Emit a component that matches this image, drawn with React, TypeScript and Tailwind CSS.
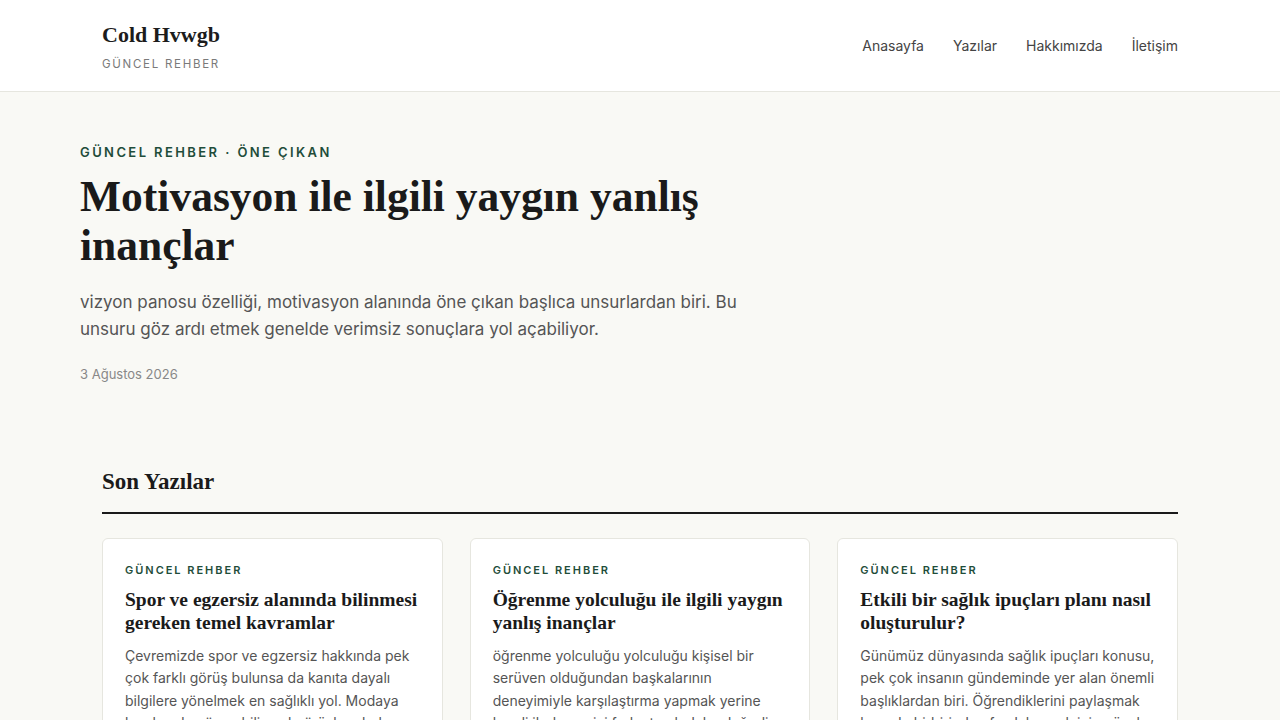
const serif = { fontFamily: '"Liberation Serif", "Times New Roman", serif' }

const posts = [
    {
        title: 'Spor ve egzersiz alanında bilinmesi gereken temel kavramlar',
        excerpt:
            'Çevremizde spor ve egzersiz hakkında pek çok farklı görüş bulunsa da kanıta dayalı bilgilere yönelmek en sağlıklı yol. Modaya kapılmadan önce bilimsel görüşlere bakın.',
    },
    {
        title: 'Öğrenme yolculuğu ile ilgili yaygın yanlış inançlar',
        excerpt:
            'öğrenme yolculuğu yolculuğu kişisel bir serüven olduğundan başkalarının deneyimiyle karşılaştırma yapmak yerine kendi ilerlemenizi fark etmek daha değerli.',
    },
    {
        title: 'Etkili bir sağlık ipuçları planı nasıl oluşturulur?',
        excerpt:
            'Günümüz dünyasında sağlık ipuçları konusu, pek çok insanın gündeminde yer alan önemli başlıklardan biri. Öğrendiklerini paylaşmak hem de birbirinden faydalanmak için güzel bir yol.',
    },
]

function Header() {
    return (
        <header className="border-b border-[#e6e6df] bg-white">
            <div className="mx-auto flex h-[91px] w-[1076px] items-center justify-between">
                <div className="flex flex-col pt-[4px]">
                    <span
                        className="text-[22px] leading-7 font-bold text-[#1c1c1c]"
                        style={serif}>
                        Cold Hvwgb
                    </span>
                    <span className="mt-[7px] text-[11.5px] tracking-[0.15em] text-[#7a7a7a]">
                        GÜNCEL REHBER
                    </span>
                </div>
                <nav className="flex items-center gap-[29px] text-[14px] text-[#444]">
                    <a>Anasayfa</a>
                    <a>Yazılar</a>
                    <a>Hakkımızda</a>
                    <a>İletişim</a>
                </nav>
            </div>
        </header>
    )
}

function Hero() {
    return (
        <section className="mx-auto w-[1120px] pt-[51px]">
            <p className="text-[13px] font-semibold tracking-[0.185em] text-[#1f4d3a]">
                GÜNCEL REHBER · ÖNE ÇIKAN
            </p>
            <h1
                className="mt-[9px] w-[700px] text-[43.5px] leading-[49px] font-bold text-[#1a1a1a]"
                style={serif}>
                Motivasyon ile ilgili yaygın yanlış inançlar
            </h1>
            <p className="mt-[19px] w-[680px] text-[17px] leading-[27px] text-[#555]">
                vizyon panosu özelliği, motivasyon alanında öne çıkan başlıca
                unsurlardan biri. Bu unsuru göz ardı etmek genelde verimsiz
                sonuçlara yol açabiliyor.
            </p>
            <p className="mt-[22px] text-[13px] text-[#888]">3 Ağustos 2026</p>
        </section>
    )
}

function PostCard({ title, excerpt }: { title: string; excerpt: string }) {
    return (
        <article className="rounded-md border border-[#e6e6df] bg-white px-[22px] pt-[23px] pb-6">
            <p className="text-[11px] font-semibold tracking-[0.18em] text-[#1f4d3a]">
                GÜNCEL REHBER
            </p>
            <h3
                className="mt-[9px] text-[19.5px] leading-[23px] font-bold text-[#1a1a1a]"
                style={serif}>
                {title}
            </h3>
            <p className="mt-[11px] text-[14px] leading-[22.5px] text-[#555]">
                {excerpt}
            </p>
        </article>
    )
}

export default function App() {
    return (
        <div
            className="min-h-screen bg-[#f9f9f5]"
            style={{ fontFamily: 'Inter, "Liberation Sans", sans-serif' }}>
            <Header />
            <Hero />
            <section className="mx-auto mt-[84px] w-[1076px]">
                <h2
                    className="border-b-2 border-[#1a1a1a] pb-[16px] text-[23px] leading-7 font-bold text-[#1a1a1a]"
                    style={serif}>
                    Son Yazılar
                </h2>
                <div className="mt-[24px] grid grid-cols-3 gap-[27px]">
                    {posts.map((p) => (
                        <PostCard key={p.title} {...p} />
                    ))}
                </div>
            </section>
        </div>
    )
}
